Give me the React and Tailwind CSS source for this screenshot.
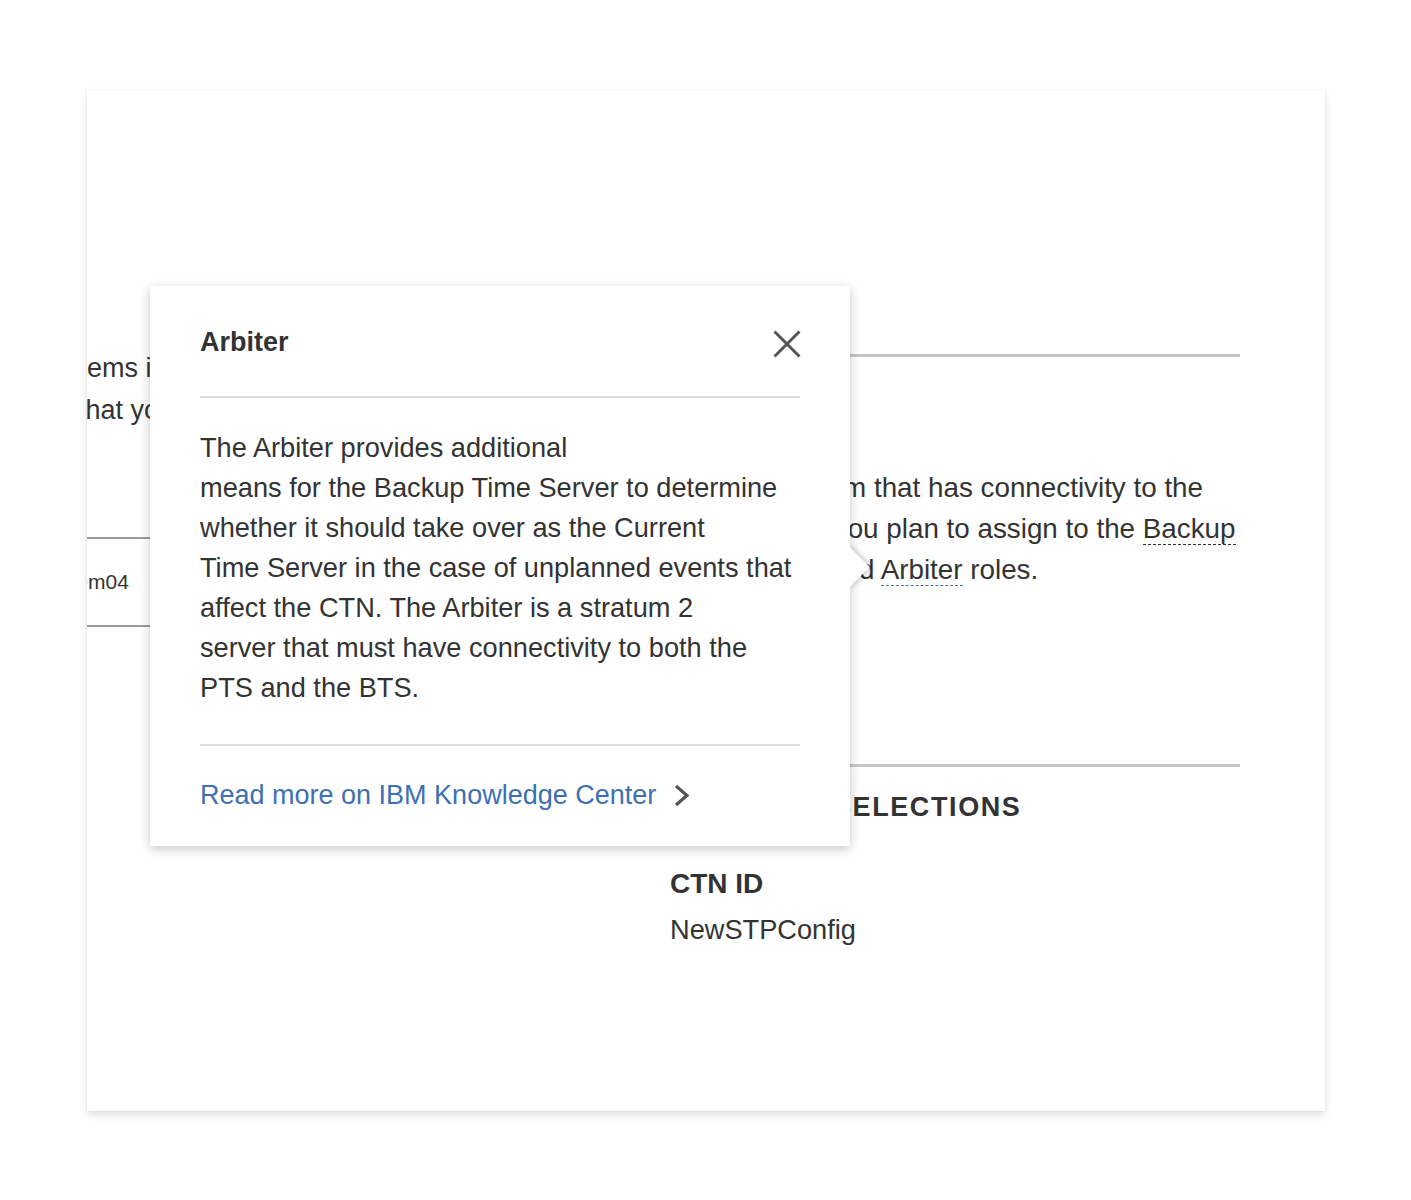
const font = { fontFamily: '"Liberation Sans", Arial, sans-serif' };

const CloseIcon = () => (
  <svg width="28" height="28" viewBox="0 0 28 28" fill="none" stroke="#555" strokeWidth="3">
    <path d="M1.5 1.5 L26.5 26.5 M26.5 1.5 L1.5 26.5" />
  </svg>
);

const Chevron = () => (
  <svg width="16" height="23" viewBox="0 0 16 23" fill="none" stroke="#555" strokeWidth="3.2">
    <path d="M2 2 L13 11.5 L2 21" />
  </svg>
);

const Popover = () => (
  <div className="absolute left-[63px] top-[196px] z-10 w-[700px] h-[560px] shadow-[0_3px_10px_rgba(0,0,0,0.22)]">
    {/* arrow */}
    <div className="absolute left-[686px] top-[267px] w-[28px] h-[28px] rotate-45 bg-white shadow-[1px_-1px_6px_rgba(0,0,0,0.25)]" />

    <div className="relative h-full bg-white px-[50px] pt-[36px] text-[#333]">
      {/* Header */}
      <div className="flex items-center justify-between h-[40px]">
        <h3 className="text-[27px] leading-[40px] font-bold">Arbiter</h3>
        <button className="mt-[4px] mr-[-1px]" aria-label="Close">
          <CloseIcon />
        </button>
      </div>
      <div className="mt-[34px] h-[2px] bg-[#dcdcdc]" />

      {/* Body */}
      <p className="mt-[30px] text-[27.2px] leading-[40px] whitespace-nowrap">
        The Arbiter provides additional
        <br />
        means for the Backup Time Server to determine
        <br />
        whether it should take over as the Current
        <br />
        Time Server in the case of unplanned events that
        <br />
        affect the CTN. The Arbiter is a stratum 2
        <br />
        server that must have connectivity to both the
        <br />
        PTS and the BTS.
      </p>
      <div className="mt-[36px] h-[2px] bg-[#dcdcdc]" />

      {/* Footer link */}
      <a href="#" className="mt-[29px] flex items-center gap-[18px] h-[40px] text-[27px] text-[#3d70b2]">
        Read more on IBM Knowledge Center
        <Chevron />
      </a>
    </div>
  </div>
);

export default function App() {
  return (
    <div className="min-h-[1200px] bg-white pt-[90px]" style={font}>
      <div className="relative ml-[87px] w-[1238px] h-[1021px] bg-white shadow-[0_4px_8px_rgba(0,0,0,0.12),0_0_2px_rgba(0,0,0,0.08)]">
        <div className="flex h-full overflow-hidden text-[#333]">
          {/* Left column */}
          <div className="ml-[-48px] w-[560px] shrink-0 pt-[257px]">
            <p className="text-[27px] leading-[42px] whitespace-nowrap">
              systems in the CPC to include
              <br />
              for that you can select roles.
            </p>
            <div className="mt-[106px] border-y-2 border-[#9a9a9a] h-[90px] flex items-center">
              <span className="text-[21px]">system04</span>
            </div>
          </div>

          {/* Right column */}
          <div className="ml-auto mr-[85px] w-[570px] shrink-0 pt-[264px]">
            <div className="h-[3px] bg-[#c6c6c6]" />
            <p className="mt-[110px] text-[27.8px] leading-[41px] whitespace-nowrap">
              Select a system that has connectivity to the
              <br />
              systems that you plan to assign to the{' '}
              <span className="border-b border-dashed border-[#333]">Backup</span>
              <br />
              Time Server and{' '}
              <span className="border-b border-dashed border-[#3d70b2]">Arbiter</span> roles.
            </p>
            <div className="mt-[174px] h-[3px] bg-[#c6c6c6]" />
            <h2 className="mt-[22px] text-[27px] leading-[36px] font-bold tracking-[1.6px] whitespace-nowrap">
              ASSIGNED SELECTIONS
            </h2>
            <div className="mt-[39px] text-[28px] leading-[40px] font-bold">CTN ID</div>
            <div className="mt-[6px] text-[27.2px] leading-[40px]">NewSTPConfig</div>
          </div>
        </div>

        <Popover />
      </div>
    </div>
  );
}
